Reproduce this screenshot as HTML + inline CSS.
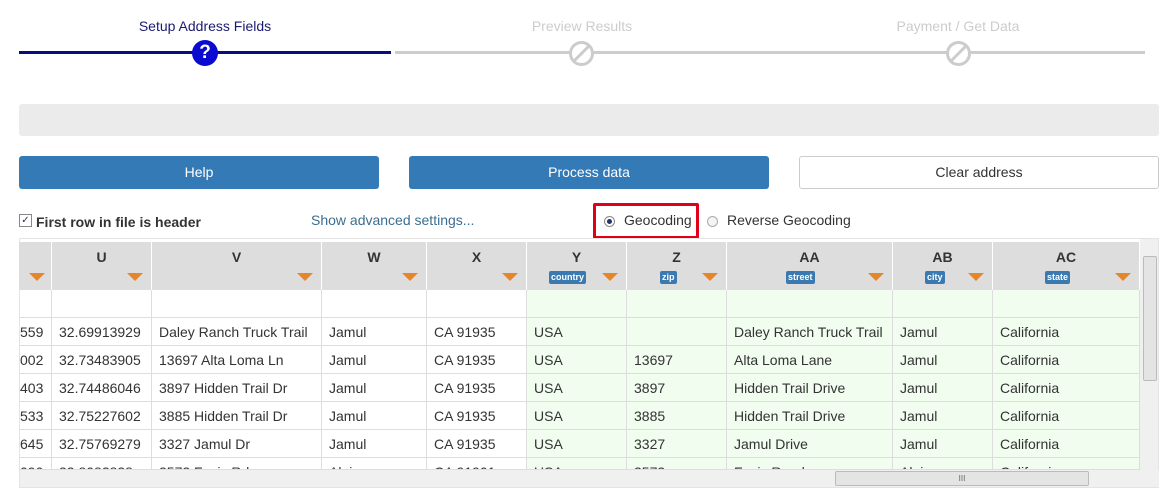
<!DOCTYPE html>
<html><head><style>
body{margin:0;width:1173px;height:501px;background:#fff;font-family:"Liberation Sans",Arial,sans-serif;position:relative;overflow:hidden}
.a{position:absolute}
.btn{position:absolute;top:156px;height:33px;border-radius:3px;font-size:14px;line-height:33px;text-align:center}
.c{position:absolute;height:28px;line-height:28px;font-size:14px;color:#333;border-right:1px solid #ddd;border-bottom:1px solid #ddd;box-sizing:border-box;padding-left:7px;white-space:nowrap;overflow:hidden}
.h{position:absolute;top:242px;height:48px;background:#ddd;border-right:1px solid #fff;box-sizing:border-box;text-align:center;font-weight:bold;font-size:14px;color:#333}
.h b{display:block;margin-top:7px}
.tri{position:absolute;right:8px;top:31px;width:0;height:0;border-left:8px solid transparent;border-right:8px solid transparent;border-top:8px solid #e6862b}
.tag{position:absolute;top:29px;background:#3a7ab0;color:#fff;font-size:9px;font-weight:bold;padding:1px 2px;border-radius:2px;line-height:11px}
.g{background:#f0fdef}
</style></head><body>
<div class="a" style="left:0;width:410px;top:18px;text-align:center;font-size:14px;color:#1a1a70">Setup Address Fields</div>
<div class="a" style="left:392px;width:380px;top:18px;text-align:center;font-size:14px;color:#ccc">Preview Results</div>
<div class="a" style="left:772px;width:372px;top:18px;text-align:center;font-size:14px;color:#ccc">Payment / Get Data</div>
<div class="a" style="left:19px;top:51px;width:372px;height:3px;background:#0b0b80"></div>
<div class="a" style="left:395px;top:51px;width:750px;height:3px;background:#ccc"></div>
<div class="a" style="left:192px;top:40px;width:26px;height:26px;border-radius:50%;background:#0a0ad0;color:#fff;font-weight:bold;font-size:19px;line-height:26px;text-align:center">?</div>
<svg class="a" style="left:568px;top:40px" width="27" height="27"><circle cx="13.5" cy="13.5" r="11" fill="#fff" stroke="#ccc" stroke-width="3"/><line x1="6" y1="21" x2="21" y2="6" stroke="#ccc" stroke-width="3"/></svg>
<svg class="a" style="left:945px;top:40px" width="27" height="27"><circle cx="13.5" cy="13.5" r="11" fill="#fff" stroke="#ccc" stroke-width="3"/><line x1="6" y1="21" x2="21" y2="6" stroke="#ccc" stroke-width="3"/></svg>
<div class="a" style="left:19px;top:104px;width:1140px;height:32px;background:#ebebeb;border-radius:3px"></div>
<div class="btn" style="left:19px;width:360px;background:#337ab7;color:#fff">Help</div>
<div class="btn" style="left:409px;width:360px;background:#337ab7;color:#fff">Process data</div>
<div class="btn" style="left:799px;width:358px;border:1px solid #ccc;height:31px;line-height:31px;color:#333">Clear address</div>
<div class="a" style="left:19px;top:214px;width:11px;height:11px;border:1px solid #888;font-size:10px;line-height:11px;text-align:center;color:#335">✓</div>
<div class="a" style="left:36px;top:214px;font-size:14px;font-weight:bold;color:#333">First row in file is header</div>
<div class="a" style="left:311px;top:212px;font-size:14px;color:#3b6e8f">Show advanced settings...</div>
<div class="a" style="left:593px;top:203px;width:100px;height:30px;border:3px solid #e0001a;border-radius:2px"></div>
<div class="a" style="left:604px;top:216px;width:9px;height:9px;border-radius:50%;border:1px solid #888;background:#fff"><div style="margin:2px;width:5px;height:5px;border-radius:50%;background:#236"></div></div>
<div class="a" style="left:624px;top:212px;font-size:14px;color:#333">Geocoding</div>
<div class="a" style="left:707px;top:216px;width:9px;height:9px;border-radius:50%;border:1px solid #aaa;background:#f4f4f4"></div>
<div class="a" style="left:727px;top:212px;font-size:14px;color:#333">Reverse Geocoding</div>
<div class="a" style="left:19px;top:238px;width:1140px;height:250px;border:1px solid #e4e4e4;box-sizing:border-box"></div>
<div class="h" style="left:19px;width:33px"><div class="tri" style="right:6px"></div></div>
<div class="h" style="left:52px;width:100px"><b>U</b><div class="tri"></div></div>
<div class="h" style="left:152px;width:170px"><b>V</b><div class="tri"></div></div>
<div class="h" style="left:322px;width:105px"><b>W</b><div class="tri"></div></div>
<div class="h" style="left:427px;width:100px"><b>X</b><div class="tri"></div></div>
<div class="h" style="left:527px;width:100px"><b>Y</b><span class="tag" style="left:22px">country</span><div class="tri"></div></div>
<div class="h" style="left:627px;width:100px"><b>Z</b><span class="tag" style="left:33px">zip</span><div class="tri"></div></div>
<div class="h" style="left:727px;width:166px"><b>AA</b><span class="tag" style="left:59px">street</span><div class="tri"></div></div>
<div class="h" style="left:893px;width:100px"><b>AB</b><span class="tag" style="left:32px">city</span><div class="tri"></div></div>
<div class="h" style="left:993px;width:147px"><b>AC</b><span class="tag" style="left:52px">state</span><div class="tri"></div></div>
<div id="rows"></div>
<script>
var cols=[[19,33],[52,100],[152,170],[322,105],[427,100],[527,100],[627,100],[727,166],[893,100],[993,147]];
var d=[["","","","","","","","","",""],
["559","32.69913929","Daley Ranch Truck Trail","Jamul","CA 91935","USA","","Daley Ranch Truck Trail","Jamul","California"],
["002","32.73483905","13697 Alta Loma Ln","Jamul","CA 91935","USA","13697","Alta Loma Lane","Jamul","California"],
["403","32.74486046","3897 Hidden Trail Dr","Jamul","CA 91935","USA","3897","Hidden Trail Drive","Jamul","California"],
["533","32.75227602","3885 Hidden Trail Dr","Jamul","CA 91935","USA","3885","Hidden Trail Drive","Jamul","California"],
["645","32.75769279","3327 Jamul Dr","Jamul","CA 91935","USA","3327","Jamul Drive","Jamul","California"],
["090","32.8082828","2572 Foxis Rd","Alpine","CA 91901","USA","2572","Foxis Road","Alpine","California"]];
var h="";
d.forEach(function(r,i){var y=290+i*28;var hh=(y+28>470)?470-y:28;
cols.forEach(function(c,j){h+='<div class="c'+(j>=5?' g':'')+'" style="left:'+c[0]+'px;top:'+y+'px;width:'+c[1]+'px;height:'+hh+'px;'+(j==0?'padding-left:1px;':'')+'">'+r[j]+'</div>';});});
document.getElementById('rows').innerHTML=h;
</script>
<div class="a" style="left:1140px;top:239px;width:18px;height:231px;background:#f0f0f0"></div>
<div class="a" style="left:1143px;top:256px;width:12px;height:123px;background:#e4e4e4;border:1px solid #bbb;border-radius:2px"></div>
<div class="a" style="left:20px;top:470px;width:1139px;height:17px;background:#f0f0f0"></div>
<div class="a" style="left:835px;top:471px;width:252px;height:13px;background:#e4e4e4;border:1px solid #bbb;border-radius:2px;font-size:8px;text-align:center;line-height:13px;color:#666">III</div>
</body></html>
